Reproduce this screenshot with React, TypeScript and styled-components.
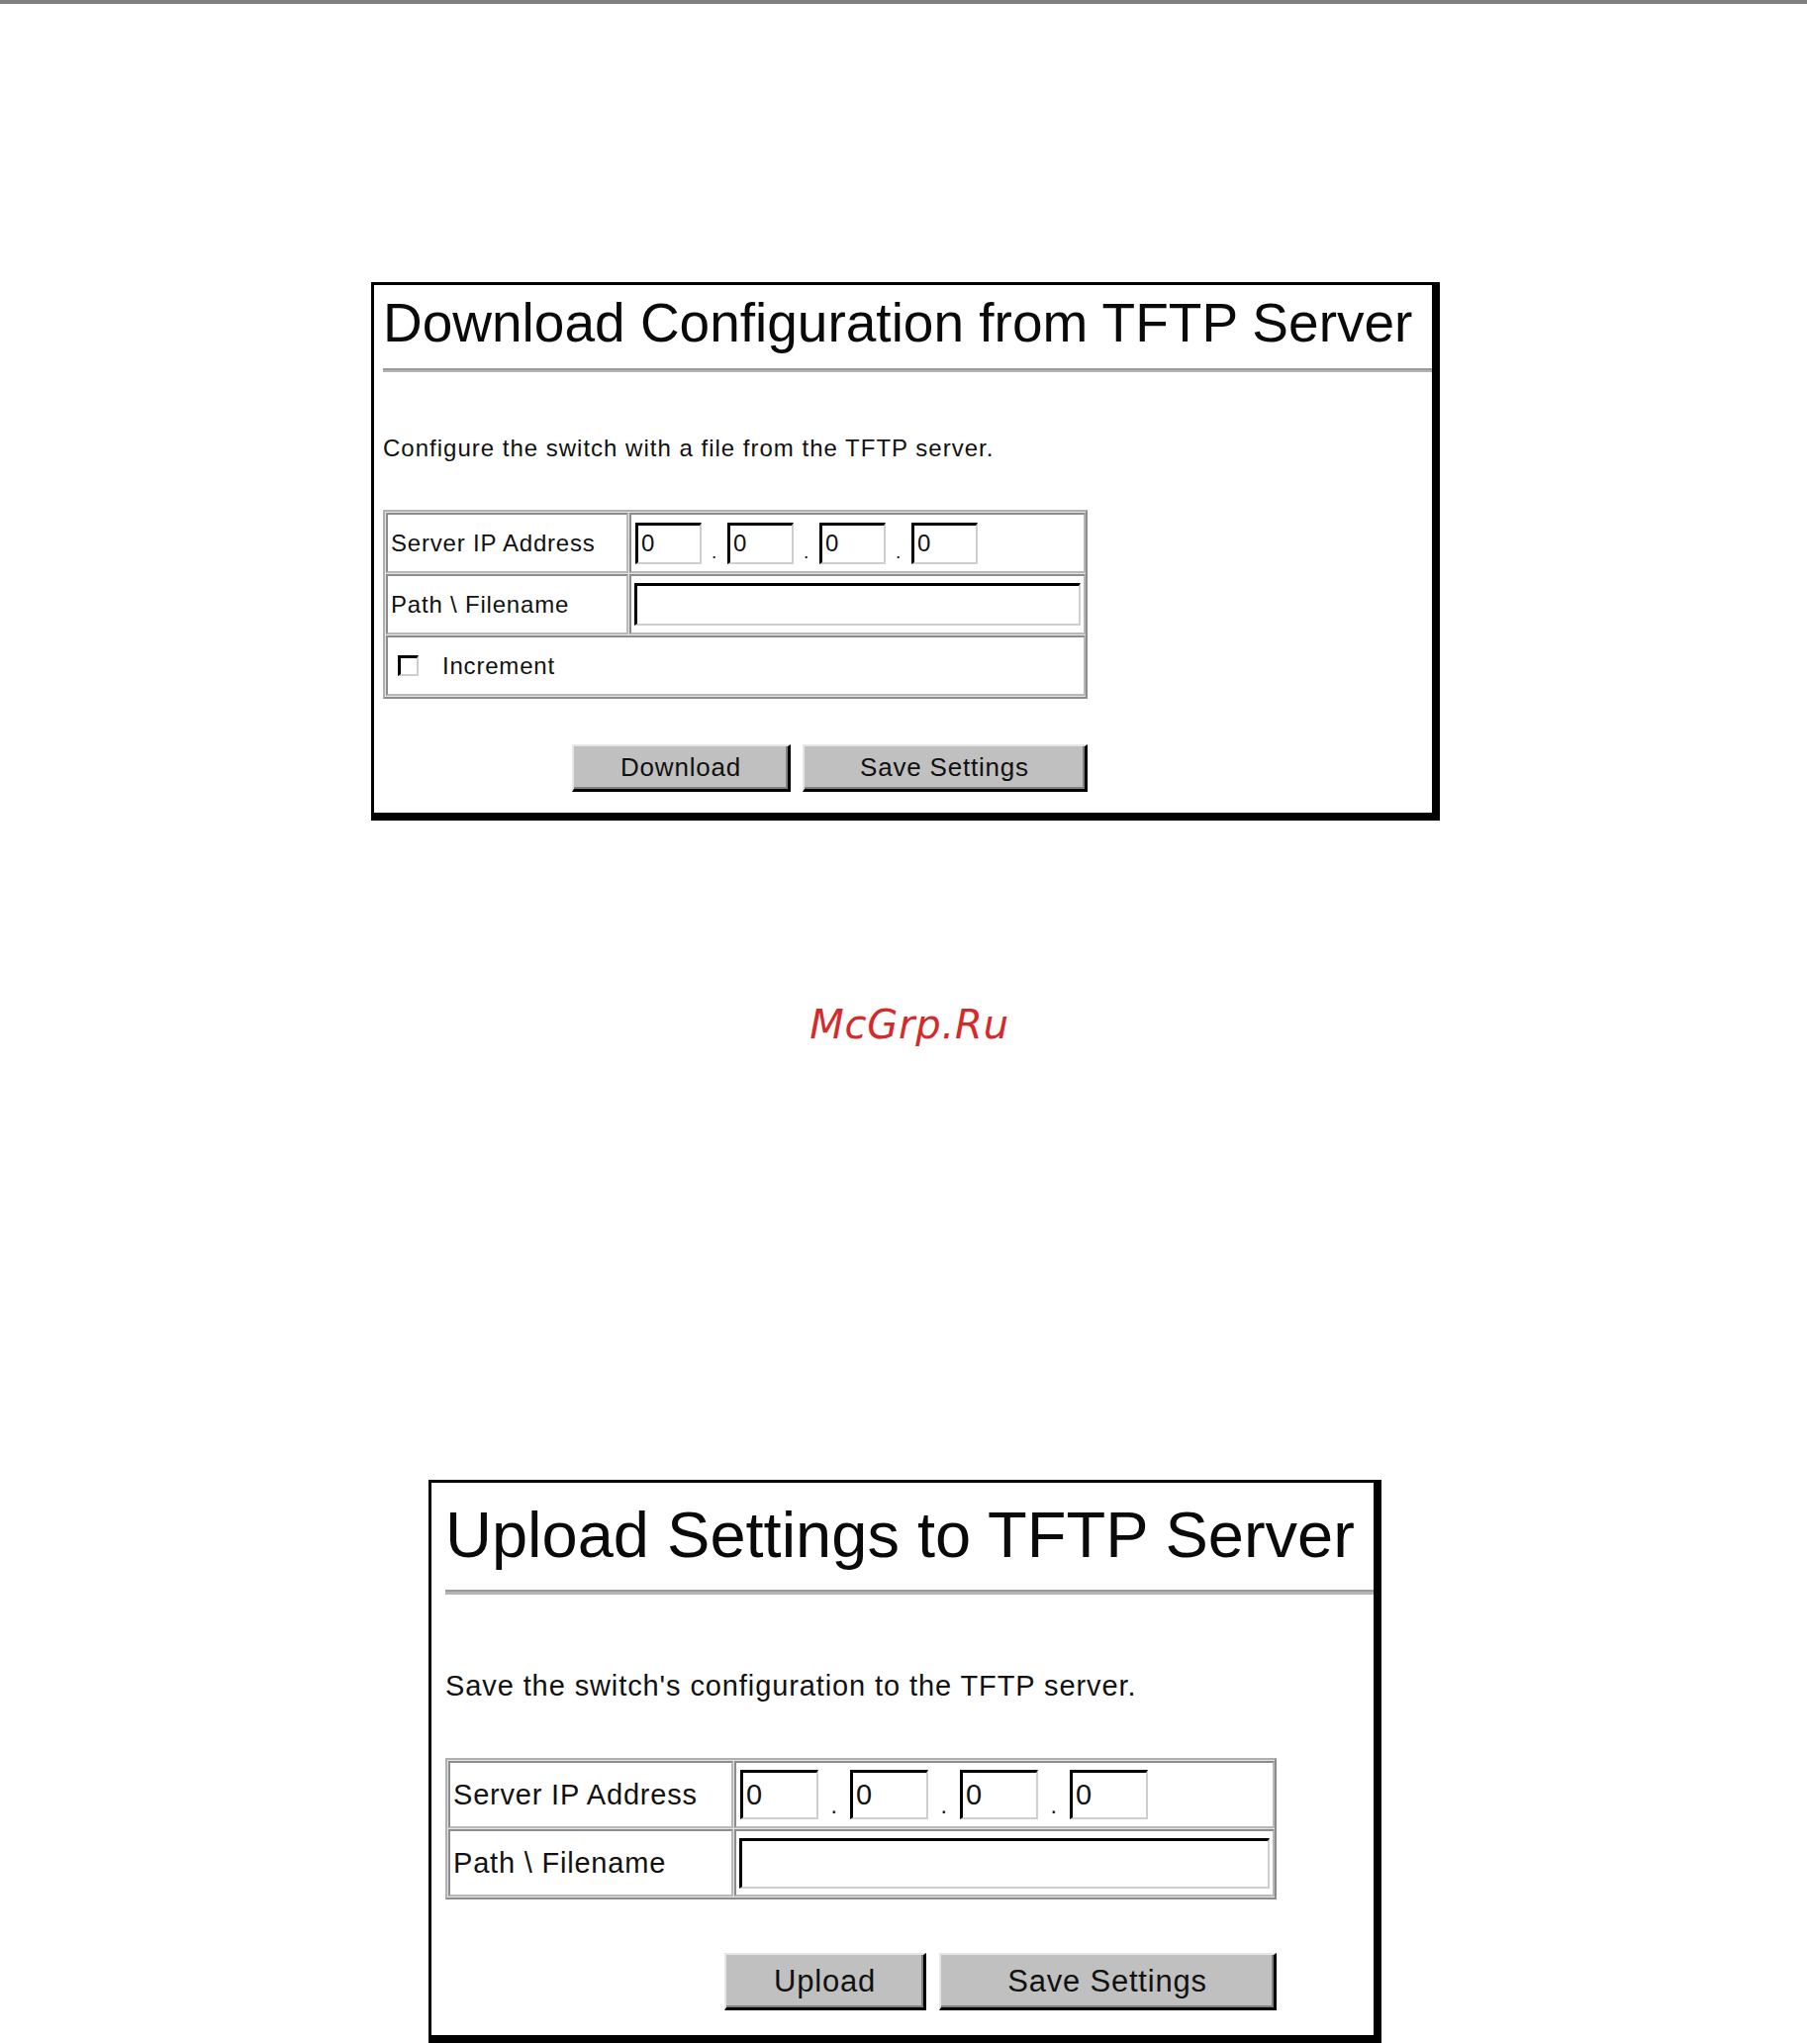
import React from "react";
import styled, { createGlobalStyle } from "styled-components";

const GlobalStyle = createGlobalStyle`
  html, body {
    margin: 0;
    padding: 0;
    background: #ffffff;
  }
  body {
    font-family: "Liberation Sans", Arial, sans-serif;
    color: #111111;
  }
`;

type Sizes = {
  boxWidth: number;
  boxLeft: number;
  padLeft: number;
  padBottom: number;
  titleSize: number;
  titleLine: number;
  titleTop: number;
  hrGap: number;
  hrHeight: number;
  descSize: number;
  descLine: number;
  descTop: number;
  descSpacing: number;
  tableTop: number;
  tableWidth: number;
  col1: number;
  rowH: number;
  textSize: number;
  ipW: number;
  ipH: number;
  ipGap: number;
  pathW: number;
  pathH: number;
  check: number;
  btnTop: number;
  btnH: number;
  btnGap: number;
  btnSize: number;
};

const small: Sizes = {
  boxWidth: 1080,
  boxLeft: 375,
  padLeft: 9,
  padBottom: 21,
  titleSize: 55,
  titleLine: 64,
  titleTop: 6,
  hrGap: 14,
  hrHeight: 4,
  descSize: 24,
  descLine: 30,
  descTop: 62,
  descSpacing: 1,
  tableTop: 47,
  tableWidth: 712,
  col1: 248,
  rowH: 61,
  textSize: 24,
  ipW: 67,
  ipH: 42,
  ipGap: 26,
  pathW: 451,
  pathH: 43,
  check: 21,
  btnTop: 46,
  btnH: 48,
  btnGap: 12,
  btnSize: 26,
};

const large: Sizes = {
  boxWidth: 963,
  boxLeft: 433,
  padLeft: 14,
  padBottom: 25,
  titleSize: 65,
  titleLine: 76,
  titleTop: 15,
  hrGap: 17,
  hrHeight: 5,
  descSize: 29,
  descLine: 36,
  descTop: 74,
  descSpacing: 0.9,
  tableTop: 55,
  tableWidth: 840,
  col1: 291,
  rowH: 68,
  textSize: 29,
  ipW: 79,
  ipH: 50,
  ipGap: 32,
  pathW: 536,
  pathH: 51,
  check: 24,
  btnTop: 54,
  btnH: 58,
  btnGap: 13,
  btnSize: 31,
};

const Page = styled.div`
  width: 1826px;
  min-height: 2065px;
`;

const TopRule = styled.div`
  height: 4px;
  background: #808080;
`;

const Box = styled.section<{ $s: Sizes; $top: number }>`
  box-sizing: border-box;
  width: ${(p) => p.$s.boxWidth}px;
  margin: ${(p) => p.$top}px 0 0 ${(p) => p.$s.boxLeft}px;
  border-style: solid;
  border-color: #000;
  border-width: 3px 8px 8px 3px;
  padding: 0 0 ${(p) => p.$s.padBottom}px ${(p) => p.$s.padLeft}px;
  display: flex;
  flex-direction: column;
  align-items: flex-start;
`;

const Title = styled.h1<{ $s: Sizes }>`
  margin: ${(p) => p.$s.titleTop}px 0 0;
  font-size: ${(p) => p.$s.titleSize}px;
  line-height: ${(p) => p.$s.titleLine}px;
  font-weight: normal;
  white-space: nowrap;
  color: #0a0a0a;
`;

const Rule = styled.div<{ $s: Sizes }>`
  align-self: stretch;
  margin-top: ${(p) => p.$s.hrGap}px;
  height: ${(p) => p.$s.hrHeight}px;
  box-sizing: border-box;
  border-top: 2px solid #9a9a9a;
  background: #b4b4b4;
`;

const Description = styled.p<{ $s: Sizes }>`
  margin: ${(p) => p.$s.descTop}px 0 0;
  font-size: ${(p) => p.$s.descSize}px;
  line-height: ${(p) => p.$s.descLine}px;
  letter-spacing: ${(p) => p.$s.descSpacing}px;
  white-space: nowrap;
`;

const FormGrid = styled.div<{ $s: Sizes }>`
  box-sizing: border-box;
  margin-top: ${(p) => p.$s.tableTop}px;
  width: ${(p) => p.$s.tableWidth}px;
  display: grid;
  grid-template-columns: ${(p) => p.$s.col1 - 3}px 1fr;
  grid-auto-rows: ${(p) => p.$s.rowH}px;
  gap: 1px;
  padding: 1px;
  border: 2px solid;
  border-color: #b0b0b0 #8c8c8c #8c8c8c #b0b0b0;
  background: #e4e4e4;
`;

const Cell = styled.div<{ $s: Sizes; $wide?: boolean }>`
  box-sizing: border-box;
  grid-column: ${(p) => (p.$wide ? "1 / span 2" : "auto")};
  display: flex;
  align-items: center;
  padding: 0 ${(p) => Math.round(p.$s.textSize * 0.12)}px;
  border: 2px solid;
  border-color: #8c8c8c #b8b8b8 #b8b8b8 #8c8c8c;
  background: #fff;
  font-size: ${(p) => p.$s.textSize}px;
  letter-spacing: 0.8px;
  white-space: nowrap;
`;

const IpGroup = styled.div<{ $s: Sizes }>`
  display: flex;
  align-items: flex-end;
  margin-left: 1px;
`;

const Dot = styled.span<{ $s: Sizes }>`
  width: ${(p) => p.$s.ipGap}px;
  text-align: center;
  font-size: ${(p) => p.$s.textSize * 0.8}px;
  line-height: 1;
  padding-bottom: 2px;
`;

const Field = styled.input<{ $w: number; $h: number; $fs: number }>`
  box-sizing: border-box;
  width: ${(p) => p.$w}px;
  height: ${(p) => p.$h}px;
  margin: 0;
  padding: 0 0 0 3px;
  border-style: solid;
  border-width: 3px 2px 2px 3px;
  border-color: #000 #cfcfcf #cfcfcf #000;
  background: #fff;
  font-family: "Liberation Sans", Arial, sans-serif;
  font-size: ${(p) => p.$fs}px;
  color: #111;
  outline: none;
`;

const CheckBox = styled.span<{ $s: Sizes }>`
  box-sizing: border-box;
  display: inline-block;
  width: ${(p) => p.$s.check}px;
  height: ${(p) => p.$s.check}px;
  margin: 0 ${(p) => Math.round(p.$s.check * 1.15)}px 0 ${(p) => Math.round(p.$s.check * 0.35)}px;
  border-style: solid;
  border-width: 3px 2px 2px 3px;
  border-color: #000 #cfcfcf #cfcfcf #000;
  background: #fff;
`;

const ButtonRow = styled.div<{ $s: Sizes }>`
  margin-top: ${(p) => p.$s.btnTop}px;
  width: ${(p) => p.$s.tableWidth}px;
  display: flex;
  justify-content: flex-end;
  gap: ${(p) => p.$s.btnGap}px;
`;

const Button = styled.button<{ $s: Sizes; $w: number }>`
  box-sizing: border-box;
  width: ${(p) => p.$w}px;
  height: ${(p) => p.$s.btnH}px;
  margin: 0;
  padding: 0;
  background: #c0c0c0;
  border-style: solid;
  border-width: 2px 3px 3px 2px;
  border-color: #e6e6e6 #000 #000 #e6e6e6;
  box-shadow: inset -2px -2px 0 #808080;
  font-family: "Liberation Sans", Arial, sans-serif;
  font-size: ${(p) => p.$s.btnSize}px;
  letter-spacing: 0.8px;
  color: #111;
`;

const Watermark = styled.div`
  margin-top: 181px;
  height: 50px;
  line-height: 50px;
  text-align: center;
  padding-left: 12px;
  font-family: "DejaVu Sans", "Liberation Sans", sans-serif;
  font-style: italic;
  font-size: 40px;
  letter-spacing: 0.8px;
  color: #d42a2a;
`;

type PanelProps = {
  s: Sizes;
  top: number;
  title: string;
  description: string;
  action: string;
  buttons: [number, number];
  increment?: boolean;
};

const Panel = ({ s, top, title, description, action, buttons, increment }: PanelProps) => (
  <Box $s={s} $top={top}>
    <Title $s={s}>{title}</Title>
    <Rule $s={s} />
    <Description $s={s}>{description}</Description>
    <FormGrid $s={s}>
      <Cell $s={s}>Server IP Address</Cell>
      <Cell $s={s}>
        <IpGroup $s={s}>
          {[0, 1, 2, 3].map((i) => (
            <React.Fragment key={i}>
              {i > 0 && <Dot $s={s}>.</Dot>}
              <Field $w={s.ipW} $h={s.ipH} $fs={s.textSize} value="0" readOnly />
            </React.Fragment>
          ))}
        </IpGroup>
      </Cell>
      <Cell $s={s}>Path \ Filename</Cell>
      <Cell $s={s}>
        <Field $w={s.pathW} $h={s.pathH} $fs={s.textSize} value="" readOnly />
      </Cell>
      {increment && (
        <Cell $s={s} $wide>
          <CheckBox $s={s} />
          Increment
        </Cell>
      )}
    </FormGrid>
    <ButtonRow $s={s}>
      <Button $s={s} $w={buttons[0]}>{action}</Button>
      <Button $s={s} $w={buttons[1]}>Save Settings</Button>
    </ButtonRow>
  </Box>
);

export default function App() {
  return (
    <Page>
      <GlobalStyle />
      <TopRule />
      <Panel
        s={small}
        top={281}
        title="Download Configuration from TFTP Server"
        description="Configure the switch with a file from the TFTP server."
        action="Download"
        buttons={[221, 288]}
        increment
      />
      <Watermark>McGrp.Ru</Watermark>
      <Panel
        s={large}
        top={435}
        title="Upload Settings to TFTP Server"
        description="Save the switch's configuration to the TFTP server."
        action="Upload"
        buttons={[204, 341]}
      />
    </Page>
  );
}
